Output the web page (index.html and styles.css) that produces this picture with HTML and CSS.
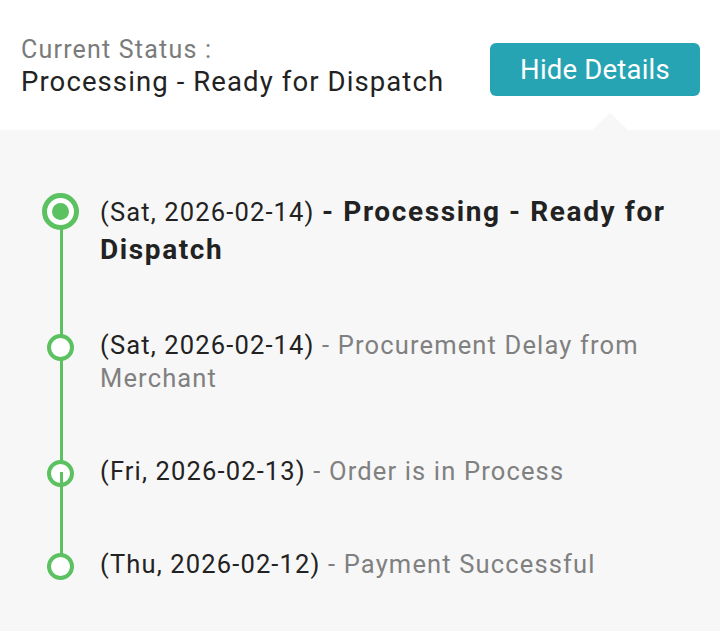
FILE: index.html
```html
<!DOCTYPE html>
<html>
<head>
<meta charset="utf-8">
<link rel="stylesheet" href="styles.css">
</head>
<body>
<header class="header">
  <div class="status">
    <div class="status-label">Current Status :</div>
    <div class="status-value">Processing - Ready for Dispatch</div>
  </div>
  <button class="toggle">Hide Details</button>
  <span class="notch"></span>
</header>
<section class="panel">
  <ol class="timeline">
    <li class="item current">
      <span class="marker"><span class="dot"></span></span>
      <p class="text"><span class="date">(Sat, 2026-02-14)</span> <strong class="title">- Processing - Ready for Dispatch</strong></p>
    </li>
    <li class="item">
      <span class="marker"></span>
      <p class="text"><span class="date">(Sat, 2026-02-14)</span> <span class="desc">- Procurement Delay from Merchant</span></p>
    </li>
    <li class="item">
      <span class="marker"></span>
      <p class="text"><span class="date">(Fri, 2026-02-13)</span> <span class="desc">- Order is in Process</span></p>
    </li>
    <li class="item">
      <span class="marker"></span>
      <p class="text"><span class="date">(Thu, 2026-02-12)</span> <span class="desc">- Payment Successful</span></p>
    </li>
  </ol>
</section>
</body>
</html>
```
FILE: styles.css
```css
* { box-sizing: border-box; }
html, body { margin: 0; padding: 0; }
body {
  width: 720px;
  height: 631px;
  overflow: hidden;
  background: #f7f7f7;
  font-family: Roboto, "Liberation Sans", sans-serif;
  color: #222;
}
.header {
  position: relative;
  height: 130px;
  background: #fff;
  display: flex;
  align-items: flex-start;
  justify-content: space-between;
  padding: 34px 20px 0 21px;
}
.status-label {
  font-size: 25px;
  line-height: 31px;
  letter-spacing: 1.2px;
  color: #7b7b7b;
}
.status-value {
  font-size: 27.5px;
  line-height: 34px;
  letter-spacing: 1.1px;
  color: #222;
}
.toggle {
  margin-top: 9px;
  width: 210px;
  height: 53px;
  border: none;
  border-radius: 6px;
  background: #27a4b4;
  color: #fff;
  font-family: Roboto, "Liberation Sans", sans-serif;
  font-size: 27.5px;
  letter-spacing: 0.2px;
  padding: 0;
}
.notch {
  position: absolute;
  left: 592px;
  bottom: 0;
  width: 0;
  height: 0;
  border-left: 18px solid transparent;
  border-right: 18px solid transparent;
  border-bottom: 17px solid #f7f7f7;
}
.panel {
  padding: 63px 20px 0 42px;
}
.timeline {
  position: relative;
  list-style: none;
  margin: 0;
  padding: 0;
  display: flex;
  flex-direction: column;
  gap: 60px;
}
.timeline::before {
  content: "";
  position: absolute;
  left: 17.5px;
  top: 19px;
  height: 355px;
  width: 3px;
  background: #5cc160;
}
.item {
  display: flex;
  align-items: flex-start;
  gap: 21px;
}
.marker {
  position: relative;
  z-index: 1;
  flex: none;
  width: 27px;
  height: 27px;
  margin: 5px 5px 0 5px;
  border: 4px solid #5cc160;
  border-radius: 50%;
  background: #fff;
}
.item:nth-child(3) .marker::after {
  content: "";
  position: absolute;
  left: 8.5px;
  top: 8px;
  width: 3px;
  height: 14px;
  background: #5cc160;
}
.item.current .marker {
  width: 37px;
  height: 37px;
  margin: 0;
  border-width: 5px;
  display: flex;
  align-items: center;
  justify-content: center;
}
.dot {
  width: 17px;
  height: 17px;
  border-radius: 50%;
  background: #5cc160;
}
.text {
  margin: 0;
  font-size: 25.5px;
  line-height: 33px;
  letter-spacing: 1.15px;
  color: #222;
}
.current .text {
  line-height: 38px;
}
.title {
  font-weight: 700;
  font-size: 28px;
  letter-spacing: 1.6px;
  color: #222;
}
.desc {
  color: #808080;
}
```
